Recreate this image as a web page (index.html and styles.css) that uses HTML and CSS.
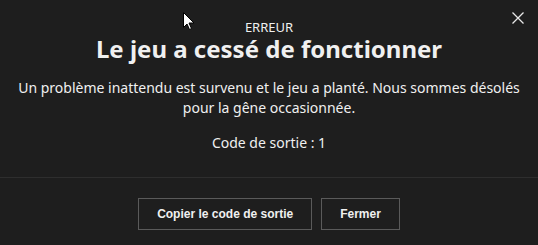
FILE: index.html
```html
<!DOCTYPE html>
<html lang="fr">
<head>
<meta charset="utf-8">
<link rel="stylesheet" href="styles.css">
</head>
<body>
<div class="dialog">
  <button class="close" aria-label="Fermer">
    <svg width="12" height="12" viewBox="0 0 12 12"><path d="M0.5 0.5 L11.5 11.5 M11.5 0.5 L0.5 11.5" stroke="#e8e8e8" stroke-width="1.3" fill="none"/></svg>
  </button>
  <div class="content">
    <div class="kicker">ERREUR</div>
    <h1 class="title">Le jeu a cessé de fonctionner</h1>
    <p class="message">Un problème inattendu est survenu et le jeu a planté. Nous sommes désolés pour la gêne occasionnée.</p>
    <p class="code">Code de sortie : 1</p>
  </div>
  <div class="footer">
    <button class="btn">Copier le code de sortie</button>
    <button class="btn">Fermer</button>
  </div>
  <svg class="cursor" width="12" height="19" viewBox="0 0 12 19"><path d="M0.5 0.5 L0.5 15.5 L4 12 L6.5 17.5 L8.5 16.5 L6 11 L11 11 Z" fill="#fff" stroke="#000" stroke-width="1"/></svg>
</div>
</body>
</html>
```
FILE: styles.css
```css
html, body {
  margin: 0;
  padding: 0;
  background: #1e1e1e;
}
.dialog {
  position: relative;
  width: 538px;
  height: 245px;
  background: #1e1e1e;
  color: #f0f0f0;
  font-family: "Noto Sans", "Open Sans", sans-serif;
  display: flex;
  flex-direction: column;
}
.close {
  position: absolute;
  top: 12px;
  right: 14px;
  background: none;
  border: 0;
  padding: 0;
  width: 12px;
  height: 12px;
  display: flex;
}
.content {
  display: flex;
  flex-direction: column;
  align-items: center;
  text-align: center;
  padding: 19px 10px 24px;
  border-bottom: 1px solid #2e2e2e;
}
.kicker {
  font-size: 13px;
  line-height: 16px;
}
.title {
  margin: 0;
  font-size: 24px;
  font-weight: 700;
  line-height: 28px;
}
.message {
  margin: 15px 0 0;
  font-size: 14px;
  line-height: 20px;
  width: 510px;
}
.code {
  margin: 15px 0 0;
  font-size: 14px;
  line-height: 20px;
}
.footer {
  display: flex;
  justify-content: center;
  gap: 9px;
  padding-top: 20px;
}
.btn {
  background: #1e1e1e;
  border: 1px solid #5a5a5a;
  color: #f0f0f0;
  font-family: "Liberation Sans", Arial, sans-serif;
  font-weight: 700;
  font-size: 12px;
  height: 32px;
  padding: 0 18px;
}
.cursor {
  position: absolute;
  left: 183px;
  top: 12px;
}
```
